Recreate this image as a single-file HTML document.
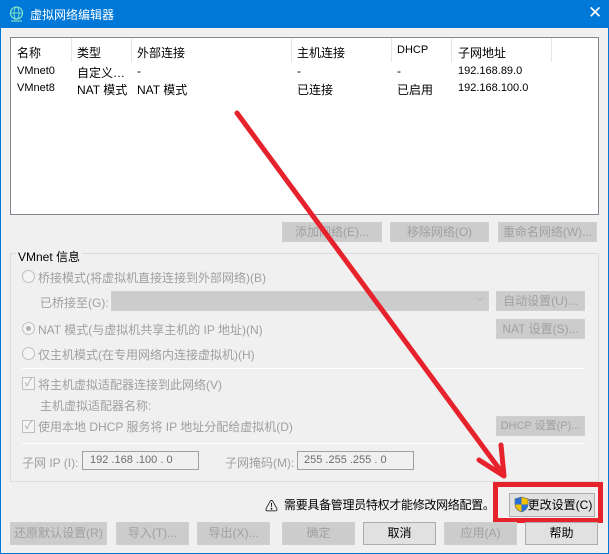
<!DOCTYPE html>
<html><head><meta charset="utf-8"><style>
*{box-sizing:border-box;margin:0;padding:0}
body{width:609px;height:554px;position:relative;background:#f0f0f0;font-family:"Liberation Sans","Noto Sans CJK SC",sans-serif;font-size:12px;color:#000;overflow:hidden}
.a{position:absolute;white-space:nowrap}
.dis{color:#a0a0a0}
.btn{position:absolute;border:1px solid #cfcfcf;background:#cccccc;color:#a0a0a0;text-align:center;font-size:12px;white-space:nowrap;overflow:hidden}
.btn.en{border:1px solid #adadad;background:#e1e1e1;color:#000}
.radio{position:absolute;width:13px;height:13px;border-radius:50%;border:1px solid #c0c0c0;background:#f4f4f4}
.chk{position:absolute;width:13px;height:13px;border:1px solid #c0c0c0;background:#f4f4f4;color:#aaa;font-size:11px;line-height:11px;text-align:center}
.sep{position:absolute;height:1px;background:#a0a0a0;border-bottom:1px solid #fff}
.hs{position:absolute;top:38px;width:1px;height:24px;background:#e5e5e5}
</style></head><body>
<div class="a" style="left:0;top:0;width:609px;height:554px;border:1px solid #0078d7"></div>
<div class="a" style="left:0;top:0;width:609px;height:28px;background:#0078d7"></div>
<svg class="a" style="left:9px;top:6px" width="15" height="16" viewBox="0 0 15 16"><circle cx="7.5" cy="7" r="6" fill="none" stroke="#7fe0c8" stroke-width="1.3"/><ellipse cx="7.5" cy="7" rx="2.5" ry="6" fill="none" stroke="#7fe0c8" stroke-width="1"/><line x1="1.5" y1="7" x2="13.5" y2="7" stroke="#7fe0c8"/><line x1="2" y1="15" x2="13" y2="15" stroke="#7fe0c8" stroke-width="1.2"/></svg>
<div class="a" style="left:30px;top:6px;color:#fff;font-size:12px">虚拟网络编辑器</div>
<div class="a" style="left:588px;top:3px;color:#fff;font-size:17px">✕</div>

<div class="a" style="left:10px;top:37px;width:589px;height:178px;background:#fff;border:1px solid #828790"></div>
<div class="hs" style="left:71px"></div><div class="hs" style="left:131px"></div><div class="hs" style="left:291px"></div><div class="hs" style="left:391px"></div><div class="hs" style="left:451px"></div><div class="hs" style="left:551px"></div>
<div class="a" style="left:17px;top:44px">名称</div><div class="a" style="left:77px;top:44px">类型</div><div class="a" style="left:137px;top:44px">外部连接</div><div class="a" style="left:297px;top:44px">主机连接</div><div class="a" style="left:397px;top:44px;font-size:11px">DHCP</div><div class="a" style="left:458px;top:44px">子网地址</div>
<div class="a" style="left:17px;top:65px;font-size:11px">VMnet0</div><div class="a" style="left:77px;top:64px">自定义…</div><div class="a" style="left:137px;top:64px">-</div><div class="a" style="left:297px;top:64px">-</div><div class="a" style="left:397px;top:64px">-</div><div class="a" style="left:458px;top:65px;font-size:11px">192.168.89.0</div>
<div class="a" style="left:17px;top:82px;font-size:11px">VMnet8</div><div class="a" style="left:77px;top:81px">NAT 模式</div><div class="a" style="left:137px;top:81px">NAT 模式</div><div class="a" style="left:297px;top:81px">已连接</div><div class="a" style="left:397px;top:81px">已启用</div><div class="a" style="left:458px;top:82px;font-size:11px">192.168.100.0</div>

<div class="btn" style="left:282px;top:222px;width:100px;height:20px;line-height:18px">添加网络(E)...</div>
<div class="btn" style="left:390px;top:222px;width:99px;height:20px;line-height:18px">移除网络(O)</div>
<div class="btn" style="left:498px;top:222px;width:99px;height:20px;line-height:18px">重命名网络(W)...</div>

<div class="a" style="left:10px;top:253px;width:589px;height:229px;border:1px solid #dcdcdc"></div>
<div class="a" style="left:16px;top:248px;background:#f0f0f0;padding:0 2px">VMnet 信息</div>
<div class="radio" style="left:22px;top:270px"></div><div class="a dis" style="left:38px;top:269px">桥接模式(将虚拟机直接连接到外部网络)(B)</div>
<div class="a dis" style="left:40px;top:294px">已桥接至(G):</div>
<div class="a" style="left:111px;top:291px;width:378px;height:20px;background:#cccccc;border:1px solid #cfcfcf"></div>
<div class="a dis" style="left:476px;top:293px;font-size:10px">⌵</div>
<div class="btn" style="left:496px;top:291px;width:89px;height:20px;line-height:18px">自动设置(U)...</div>
<div class="radio" style="left:22px;top:322px"></div><div class="a" style="left:26px;top:326px;width:5px;height:5px;border-radius:50%;background:#b0b0b0"></div>
<div class="a dis" style="left:38px;top:321px">NAT 模式(与虚拟机共享主机的 IP 地址)(N)</div>
<div class="btn" style="left:496px;top:319px;width:89px;height:20px;line-height:18px">NAT 设置(S)...</div>
<div class="radio" style="left:22px;top:347px"></div><div class="a dis" style="left:38px;top:346px">仅主机模式(在专用网络内连接虚拟机)(H)</div>
<div class="sep" style="left:22px;top:368px;width:563px;background:#c8c8c8"></div>
<div class="chk" style="left:22px;top:377px">✓</div><div class="a dis" style="left:38px;top:376px">将主机虚拟适配器连接到此网络(V)</div>
<div class="a dis" style="left:40px;top:397px">主机虚拟适配器名称:</div>
<div class="chk" style="left:22px;top:420px">✓</div><div class="a dis" style="left:38px;top:418px">使用本地 DHCP 服务将 IP 地址分配给虚拟机(D)</div>
<div class="btn" style="left:496px;top:416px;width:89px;height:20px;line-height:18px;font-size:11px">DHCP 设置(P)...</div>
<div class="sep" style="left:22px;top:443px;width:563px;background:#c8c8c8"></div>
<div class="a dis" style="left:22px;top:454px">子网 IP (I):</div>
<div class="a" style="left:82px;top:451px;width:117px;height:19px;border:1px solid #a0a0a0;color:#6d6d6d;padding-left:7px;line-height:17px;font-size:11px">192 .168 .100 .  0</div>
<div class="a dis" style="left:225px;top:454px">子网掩码(M):</div>
<div class="a" style="left:297px;top:451px;width:117px;height:19px;border:1px solid #a0a0a0;color:#6d6d6d;padding-left:6px;line-height:17px;font-size:11px">255 .255 .255 .  0</div>

<div class="a" style="left:265px;top:496px;font-size:13px">⚠</div>
<div class="a" style="left:284px;top:496px;letter-spacing:-0.3px">需要具备管理员特权才能修改网络配置。</div>
<div class="btn en" style="left:509px;top:493px;width:86px;height:24px;line-height:22px;padding-left:16px">更改设置(C)</div>
<svg class="a" style="left:514px;top:496px" width="15" height="17" viewBox="0 0 15 17"><path d="M7.5 1 L14 3 V8 C14 12 11 15 7.5 16 C4 15 1 12 1 8 V3 Z" fill="#f3c300" stroke="#555" stroke-width=".6"/><path d="M7.5 1 L1 3 V8.5 H7.5 Z" fill="#2a6fd6"/><path d="M7.5 8.5 H14 C13.6 12 11 15 7.5 16 Z" fill="#2a6fd6"/></svg>
<div class="a" style="left:493px;top:482px;width:110px;height:41px;border:5px solid #e6222c"></div>

<div class="btn" style="left:10px;top:522px;width:97px;height:23px;line-height:21px">还原默认设置(R)</div>
<div class="btn" style="left:116px;top:522px;width:73px;height:23px;line-height:21px">导入(T)...</div>
<div class="btn" style="left:197px;top:522px;width:73px;height:23px;line-height:21px">导出(X)...</div>
<div class="btn" style="left:282px;top:522px;width:73px;height:23px;line-height:21px">确定</div>
<div class="btn en" style="left:363px;top:522px;width:73px;height:23px;line-height:21px">取消</div>
<div class="btn" style="left:444px;top:522px;width:73px;height:23px;line-height:21px">应用(A)</div>
<div class="btn en" style="left:525px;top:522px;width:73px;height:23px;line-height:21px">帮助</div>

<svg class="a" style="left:0;top:0" width="609" height="554"><g stroke="#e6222c" stroke-width="5" fill="none" stroke-linecap="round" stroke-linejoin="round"><line x1="237" y1="113" x2="503" y2="474"/><polyline points="479,460 504,476 501,445"/></g></svg>
</body></html>
